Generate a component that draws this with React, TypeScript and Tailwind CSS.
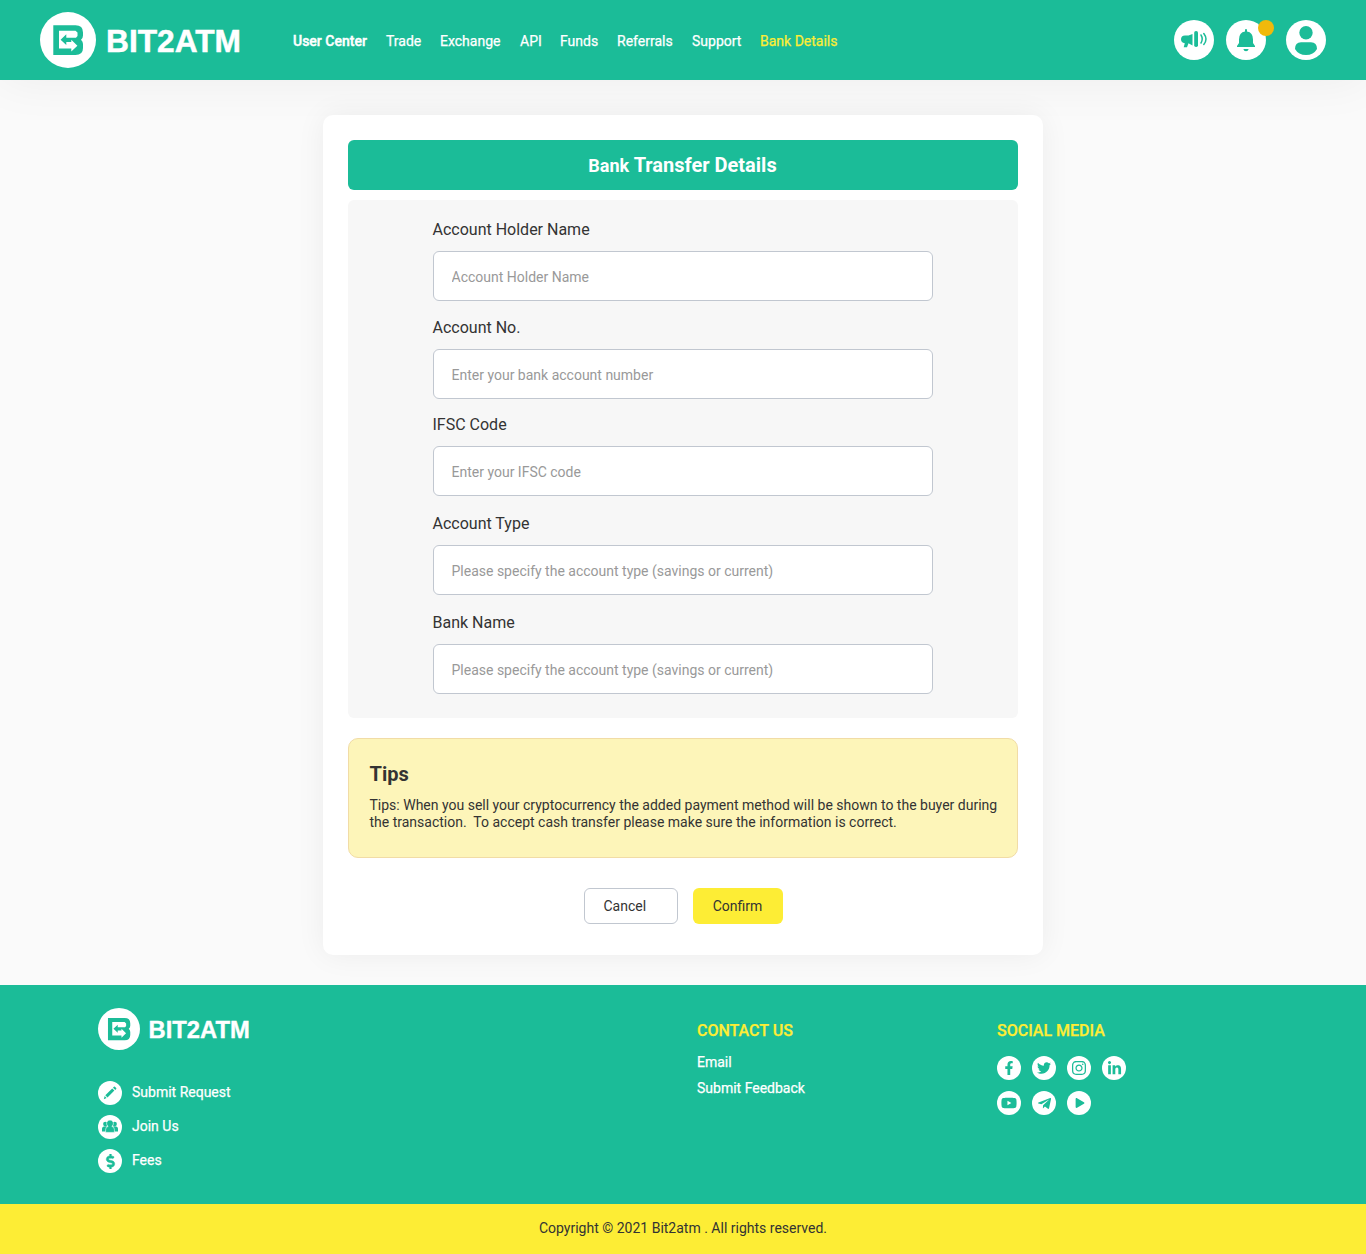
import React from "react";
import { FaFacebookF, FaTwitter, FaInstagram, FaLinkedinIn, FaYoutube, FaTelegramPlane, FaPlay, FaDollarSign } from "react-icons/fa";

function LogoMark({ className }: { className: string }) {
  return (
    <svg viewBox="0 0 56 56" className={className}>
      <circle cx="28" cy="28" r="28" fill="#fff" />
      <path d="M13.3 13.3H35.5Q43 13.3 43 20.5V23.500Q43 26 41 27.800Q43 29.500 43 32V36Q43 43 35.500 43H13.300Z" fill="#1bbc98" />
      <path d="M19 18.700H35.500L37.500 20.500V24L36 25.700H26.300V22.300L20.600 27.700L26.300 33.100V30H31.300V27.700L37.400 33.700L31.300 39.500V36.500H19Z" fill="#fff" />
    </svg>
  );
}

function Logo({ small = false }: { small?: boolean }) {
  return (
    <div className="flex items-center">
      <LogoMark className={small ? "size-[42px]" : "size-14"} />
      <svg viewBox="0 0 140 40" className={small ? "ml-[7px] h-[30px] w-[105px]" : "ml-2 h-10 w-[140px]"}>
        <text x="2" y="32" fontFamily="Liberation Sans, sans-serif" fontWeight="700" fontSize="31.500" textLength="135" lengthAdjust="spacingAndGlyphs" fill="#fff" stroke="#fff" strokeWidth="0.500">BIT2ATM</text>
      </svg>
    </div>
  );
}

const nav = [
  ["User Center", "w-[93px] font-medium text-white [-webkit-text-stroke:0.4px]"],
  ["Trade", "w-[54px] text-white"],
  ["Exchange", "w-20 text-white"],
  ["API", "w-10 text-white"],
  ["Funds", "w-[57px] text-white"],
  ["Referrals", "w-[75px] text-white"],
  ["Support", "w-[68px] text-white"],
  ["Bank Details", "text-[#fded35]"],
];

const fields = [
  ["Account Holder Name", "Account Holder Name", "mb-[15px]"],
  ["Account No.", "Enter your bank account number", "mb-3.5"],
  ["IFSC Code", "Enter your IFSC code", "mb-4"],
  ["Account Type", "Please specify the account type (savings or current)", "mb-4"],
  ["Bank Name", "Please specify the account type (savings or current)", ""],
];

function Pencil() {
  return (
    <svg viewBox="0 0 24 24" className="size-6" fill="#1bbc98">
      <path d="M5.800 18.200l.9-3.100 1.900 1.900zM7.300 14.200l6.900-6.800 2.200 2.200-6.900 6.900zM15 6.700l.9-.9q.5-.4 1 0l1.300 1.300q.4.500 0 1l-.9.900z" />
    </svg>
  );
}

function People() {
  return (
    <svg viewBox="0 0 24 24" className="size-6" fill="#1bbc98">
      <circle cx="7.300" cy="9" r="2.200" />
      <circle cx="16.700" cy="9" r="2.200" />
      <path d="M4 16.500v-2.700q0-2.600 3.300-2.600t3.300 2.600v2.700zM13.400 16.500v-2.700q0-2.600 3.300-2.600t3.300 2.600v2.700z" />
      <path d="M7.600 17.400v-2.700q0-3 2.600-3.300a3.400 3.400 0 1 1 3.600 0q2.600.3 2.600 3.300v2.700z" stroke="#fff" strokeWidth=".6" />
    </svg>
  );
}

const links = [
  ["Submit Request", <Pencil />],
  ["Join Us", <People />],
  ["Fees", <FaDollarSign className="size-[15px]" stroke="currentColor" strokeWidth="15" />],
] as const;

const social = [
  <FaFacebookF className="size-[14px]" />,
  <FaTwitter className="size-[14px]" />,
  <FaInstagram className="size-4" />,
  <FaLinkedinIn className="size-[15px]" />,
  <FaYoutube className="size-4" />,
  <FaTelegramPlane className="size-[15px]" />,
  <FaPlay className="ml-px size-[10px]" />,
];

export default function App() {
  return (
    <div className="flex h-[1254px] w-[1366px] flex-col overflow-hidden bg-[#fafafa] font-['Roboto',sans-serif] text-sm text-[#333]">
      <header className="flex h-20 shrink-0 items-center bg-[#1bbc98] px-10 shadow-[0_0_50px_rgba(0,0,0,0.06)]">
        <Logo />
        <nav className="ml-[49px] flex pt-0.5 leading-5 [-webkit-text-stroke:0.25px]">
          {nav.map(([label, cls]) => (
            <a key={label} className={"whitespace-nowrap " + cls}>{label}</a>
          ))}
        </nav>
        <div className="ml-auto flex items-center">
          <svg viewBox="0 0 40 40" className="mr-3 size-10">
            <circle cx="20" cy="20" r="20" fill="#fff" />
            <g fill="#1bbc98">
              <path d="M18.500 14v11.400l-4-2.200-1.500 4H9.700l1.100-4Q7 22.800 7 19.200q0-3.800 4-3.800h3.500z" />
              <rect x="20.200" y="11" width="3.800" height="16" rx="1.800" />
            </g>
            <path d="M27 15q2.400 4 0 8M29.800 13.500q4.400 5.700 0 11" fill="none" stroke="#1bbc98" strokeWidth="1.500" strokeLinecap="round" />
          </svg>
          <div className="relative mr-5 size-10">
            <svg viewBox="0 0 40 40" className="size-10">
              <circle cx="20" cy="20" r="20" fill="#fff" />
              <g fill="#1bbc98">
                <path d="M19 11.500V10a1 1 0 0 1 2 0v1.500q6 .9 6 8V23l2 3v1H11v-1l2-3v-3.500q0-7.100 6-8z" />
                <path d="M17.300 29h5.400q-.6 2.200-2.700 2.200T17.300 29z" />
              </g>
            </svg>
            <span className="absolute -right-2 top-0 size-4 rounded-full bg-[#f0b90b]" />
          </div>
          <svg viewBox="0 0 40 40" className="size-10">
            <circle cx="20" cy="20" r="20" fill="#fff" />
            <circle cx="20" cy="12.800" r="6.700" fill="#1bbc98" />
            <path d="M9 29q0-6.800 6-6.800h10q6 0 6 6.800-3.500 6-11 6T9 29z" fill="#1bbc98" />
          </svg>
        </div>
      </header>

      <main className="mx-auto mt-[35px] h-[840px] w-[720px] shrink-0 rounded-[10px] bg-white p-[25px] shadow-[0_0_30px_rgba(0,0,0,0.06)]">
        <h1 className="flex h-[50px] items-center justify-center rounded-[6px] bg-[#1bbc98] pr-px text-xl font-bold text-white">
          <span className="whitespace-pre"><span className="text-lg">Bank </span>Transfer Details</span>
        </h1>
        <section className="mt-2.5 h-[518px] rounded-[6px] bg-[#f7f7f7] px-[85px] pt-[18px]">
          {fields.map(([label, hint, gap]) => (
            <label key={label} className={"block " + gap}>
              <span className="-ml-[0.5px] block h-[33px] text-base leading-6">{label}</span>
              <input placeholder={hint} className="block h-[50px] w-[500px] rounded-[6px] border border-[#c1c7d0] bg-white px-[17.5px] pt-0.5 text-sm placeholder:text-[#999]" />
            </label>
          ))}
        </section>
        <section className="mt-5 h-[120px] rounded-[10px] border border-[#f1dca6] bg-[#fdf5b9] pl-[20.5px] pt-[23px]">
          <h2 className="text-xl font-bold leading-6">Tips</h2>
          <p className="mt-[11px] whitespace-pre leading-[17px]">{"Tips: When you sell your cryptocurrency the added payment method will be shown to the buyer during\nthe transaction.  To accept cash transfer please make sure the information is correct."}</p>
        </section>
        <div className="mt-[30px] flex pl-[236px]">
          <button className="h-9 w-[94px] rounded-[6px] border border-[#c1c7d0] pl-[18.5px] text-left">Cancel</button>
          <button className="ml-[15px] h-9 w-[90px] rounded-[6px] bg-[#fded35] pr-px">Confirm</button>
        </div>
      </main>

      <footer className="mt-[30px] flex h-[219px] shrink-0 bg-[#1bbc98] pl-[98px] pt-[23px] text-white [-webkit-text-stroke:0.25px]">
        <div className="w-[599px]">
          <Logo small />
          <ul className="mt-[31px] space-y-2.5">
            {links.map(([label, icon]) => (
              <li key={label} className="flex items-center">
                <span className="flex size-6 items-center justify-center rounded-full bg-white text-[#1bbc98]">{icon}</span>
                <span className="-mt-0.5 ml-2.5">{label}</span>
              </li>
            ))}
          </ul>
        </div>
        <div className="w-[300px] pt-[11px]">
          <h3 className="text-base font-medium leading-6 text-[#fded35]">CONTACT US</h3>
          <p className="mt-[9px] leading-5">Email</p>
          <p className="mt-1.5 leading-5">Submit Feedback</p>
        </div>
        <div className="pt-[11px]">
          <h3 className="text-base font-medium leading-6 text-[#fded35]">SOCIAL MEDIA</h3>
          <div className="mt-[13px] grid grid-cols-[repeat(4,24px)] gap-[11px]">
            {social.map((icon, i) => (
              <span key={i} className="flex size-6 items-center justify-center rounded-full bg-white text-[#1bbc98]">{icon}</span>
            ))}
          </div>
        </div>
      </footer>
      <div className="flex h-[50px] shrink-0 items-center justify-center bg-[#fded35] pb-0.5">Copyright © 2021 Bit2atm . All rights reserved.</div>
    </div>
  );
}
